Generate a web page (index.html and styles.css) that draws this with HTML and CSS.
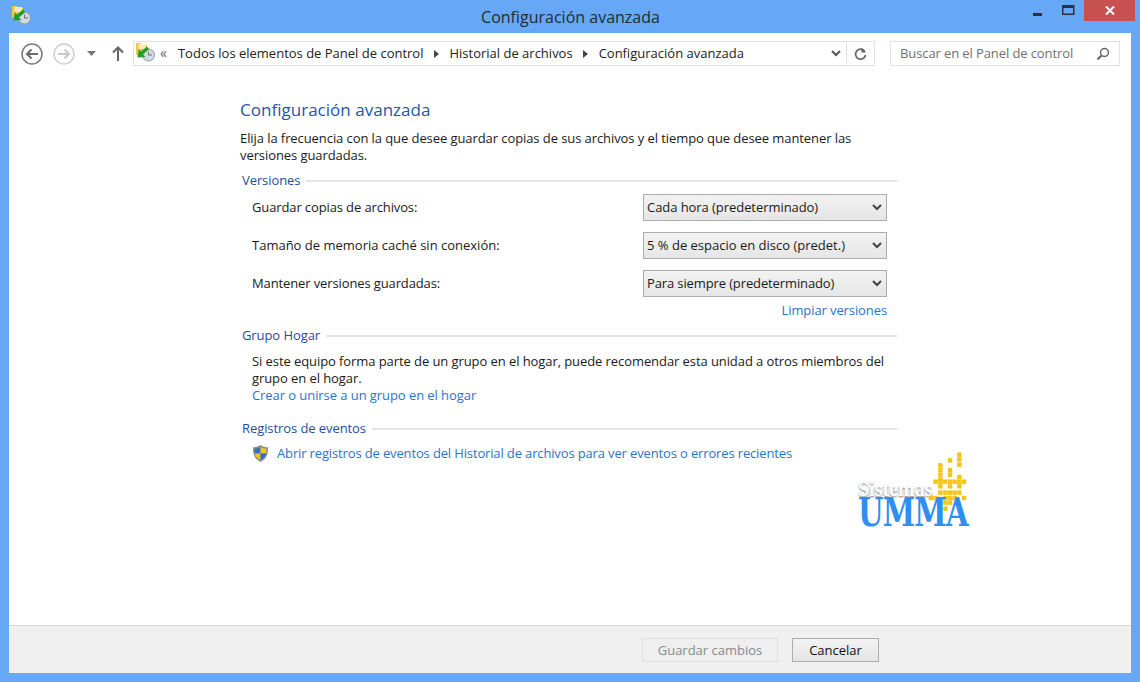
FILE: index.html
```html
<!DOCTYPE html>
<html lang="es">
<head>
<meta charset="utf-8">
<title>Configuración avanzada</title>
<link rel="stylesheet" href="styles.css">
</head>
<body>
<svg width="0" height="0" class="defs">
  <defs>
    <g id="fh">
      <path d="M1 1h4.500l1 1H11l1 1v10H2l-1-1z" fill="#f0c64c"/>
      <path d="M3.500 2H11v5H3.500z" fill="#fcedb0"/>
      <circle cx="13.500" cy="13" r="6" fill="#d3d9de" stroke="#8f9aa3" stroke-width="1"/>
      <path d="M13.500 9.500V13h3.500" fill="none" stroke="#66727c" stroke-width="1"/>
      <path d="M12 4.500 6 9.500 3.800 7.300 2.500 15.500l8-.6-2.500-2.400 6-5.300z" fill="#1f9e28"/>
    </g>
  </defs>
</svg>
<div class="window">
  <header class="titlebar">
    <svg class="app-icon" width="20" height="20" viewBox="0 0 20 20"><use href="#fh"/></svg>
    <div class="title">Configuración avanzada</div>
    <div class="controls">
      <span class="ctl ctl-min"><svg width="10" height="3" viewBox="0 0 10 3"><rect width="9" height="3" fill="#2a3340"/></svg></span>
      <span class="ctl"><svg width="13" height="11" viewBox="0 0 13 11"><rect x=".75" y=".75" width="11" height="8.500" fill="none" stroke="#2a3340" stroke-width="1.500"/><rect x="1" y="1" width="11" height="2" fill="#2a3340"/></svg></span>
      <span class="close"><svg width="10" height="9" viewBox="0 0 10 9"><path d="M1 .5l8 8M9 .5l-8 8" stroke="#fff" stroke-width="2"/></svg></span>
    </div>
  </header>
  <div class="client">
    <nav class="toolbar">
      <svg class="nav-btn" width="22" height="22" viewBox="0 0 22 22"><circle cx="11" cy="11" r="10" fill="none" stroke="#7a7a7a" stroke-width="1.500"/><path d="M17 11H6M10.500 6.500 6 11l4.500 4.500" fill="none" stroke="#6a6a6a" stroke-width="2"/></svg>
      <svg class="nav-btn" width="22" height="22" viewBox="0 0 22 22"><circle cx="11" cy="11" r="10" fill="none" stroke="#cfcfcf" stroke-width="1.500"/><path d="M5 11h11M11.500 6.500 16 11l-4.500 4.500" fill="none" stroke="#c9c9c9" stroke-width="2"/></svg>
      <svg class="nav-drop" width="9" height="5" viewBox="0 0 9 5"><path d="M0 0h9L4.500 5z" fill="#777"/></svg>
      <svg class="nav-up" width="12" height="15" viewBox="0 0 12 15"><path d="M6 15V2M1 6.500 6 1.500l5 5" fill="none" stroke="#666" stroke-width="2"/></svg>
      <div class="address">
        <svg class="addr-icon" width="20" height="20" viewBox="0 0 20 20"><use href="#fh"/></svg>
        <span class="crumb-more">«</span>
        <span class="crumb">Todos los elementos de Panel de control</span>
        <svg class="sep" width="5" height="8" viewBox="0 0 5 8"><path d="M0 0l5 4-5 4z" fill="#444"/></svg>
        <span class="crumb">Historial de archivos</span>
        <svg class="sep" width="5" height="8" viewBox="0 0 5 8"><path d="M0 0l5 4-5 4z" fill="#444"/></svg>
        <span class="crumb">Configuración avanzada</span>
        <svg class="addr-chev" width="10" height="7" viewBox="0 0 10 7"><path d="M1 1l4 4 4-4" fill="none" stroke="#555" stroke-width="2"/></svg>
        <span class="refresh"><svg width="13" height="14" viewBox="0 0 13 14"><path d="M10.800 4.500A5 5 0 1 0 11.500 8" fill="none" stroke="#666" stroke-width="1.700"/><path d="M7.500 .5v5h4.500z" fill="#666"/></svg></span>
      </div>
      <div class="search">
        <span class="search-text">Buscar en el Panel de control</span>
        <svg width="14" height="14" viewBox="0 0 14 14"><circle cx="8.500" cy="5.500" r="4" fill="none" stroke="#666" stroke-width="1.500"/><path d="M5.500 8.500l-4 4" stroke="#666" stroke-width="2.200"/></svg>
      </div>
    </nav>
    <main class="main">
      <h1 class="heading">Configuración avanzada</h1>
      <p class="desc">Elija la frecuencia con la que desee guardar copias de sus archivos y el tiempo que desee mantener las versiones guardadas.</p>

      <div class="sec-head"><span>Versiones</span><i></i></div>
      <div class="rows">
        <div class="row"><span>Guardar copias de archivos:</span><div class="select">Cada hora (predeterminado)<svg width="10" height="7" viewBox="0 0 10 7"><path d="M1 1l4 4 4-4" fill="none" stroke="#444" stroke-width="2"/></svg></div></div>
        <div class="row row-wide"><span>Tamaño de memoria caché sin conexión:</span><div class="select">5 % de espacio en disco (predet.)<svg width="10" height="7" viewBox="0 0 10 7"><path d="M1 1l4 4 4-4" fill="none" stroke="#444" stroke-width="2"/></svg></div></div>
        <div class="row"><span>Mantener versiones guardadas:</span><div class="select select-tight">Para siempre (predeterminado)<svg width="10" height="7" viewBox="0 0 10 7"><path d="M1 1l4 4 4-4" fill="none" stroke="#444" stroke-width="2"/></svg></div></div>
      </div>
      <div class="clean"><a class="link">Limpiar versiones</a></div>

      <div class="sec-head sec-home"><span>Grupo Hogar</span><i></i></div>
      <div class="indent">
        <p class="home-text">Si este equipo forma parte de un grupo en el hogar, puede recomendar esta unidad a otros miembros del grupo en el hogar.</p>
        <a class="link link-home">Crear o unirse a un grupo en el hogar</a>
      </div>

      <div class="sec-head sec-events"><span>Registros de eventos</span><i></i></div>
      <div class="indent event-row">
        <svg width="17" height="19" viewBox="0 0 18 19"><path d="M9 .5c2.500 1.800 5 2.300 8 2.500 0 7-1 12-8 15.500C2 15 1 10 1 3c3-.2 5.500-.7 8-2.500z" fill="#8d8d8d"/><path d="M9 2.500v7H3c-.2-1.800-.2-3.500-.1-5.200C5 4.100 7.200 3.600 9 2.500z" fill="#2c6fc4"/><path d="M9 2.500c1.800 1.100 4 1.600 6.100 1.800.1 1.700.1 3.400-.1 5.200H9z" fill="#f3c623"/><path d="M3 9.500h6v7c-3.500-2-5.400-4-6-7z" fill="#f3c623"/><path d="M9 9.500h6c-.6 3-2.500 5-6 7z" fill="#2c6fc4"/></svg>
        <a class="link link-event">Abrir registros de eventos del Historial de archivos para ver eventos o errores recientes</a>
      </div>
    </main>
    <div class="logo">
      <svg class="logo-px" width="42" height="60" viewBox="260 35 126 180" fill="#f5c518" stroke="#f5c518" stroke-width="1.500">
        <path d="M351 37h12v12h-12zM351 51h12v12h-12zM351 67h12v12h-12zM323 54h12v12h-12zM294 69h12v12h-12zM294 83h12v12h-12zM294 97h12v12h-12zM294 111h12v12h-12zM323 83h12v12h-12zM323 97h12v12h-12zM351 104h12v12h-12z"/>
        <path d="M280 118h12v12h-12zM294 118h12v12h-12zM308 118h12v12h-12zM323 118h12v12h-12zM337 118h12v12h-12zM351 118h12v12h-12zM365 118h12v12h-12zM294 132h12v12h-12zM323 132h12v12h-12zM351 132h12v12h-12zM294 151h12v12h-12zM309 151h12v12h-12zM323 151h12v12h-12zM337 151h12v12h-12zM351 151h12v12h-12z"/>
        <path d="M266 167h12v12h-12zM280 167h12v12h-12zM309 167h12v12h-12zM323 167h12v12h-12zM337 167h12v12h-12zM365 167h12v12h-12zM309 181h12v12h-12zM323 181h12v12h-12zM309 199h12v12h-12z"/>
      </svg>
      <span class="logo-small">Sistemas</span>
      <span class="logo-big">UMMA</span>
    </div>
    <footer class="footer">
      <button class="btn btn-off" type="button">Guardar cambios</button>
      <button class="btn btn-on" type="button">Cancelar</button>
    </footer>
  </div>
</div>
</body>
</html>
```

FILE: styles.css
```css
* { box-sizing: border-box; }
html, body { margin: 0; padding: 0; }
body { width: 1140px; height: 682px; overflow: hidden; font-family: "Open Sans", "Noto Sans", sans-serif; font-size: 13px; color: #1a1a1a; }
.defs { position: absolute; }
.window { width: 1140px; height: 682px; background: #66a8f5; display: flex; flex-direction: column; padding: 0 9px 9px; }
.titlebar { height: 33px; flex: none; display: flex; align-items: center; position: relative; margin: 0 -9px; }
.app-icon { position: absolute; left: 11px; top: 5px; }
.title { flex: 1; text-align: center; font-size: 16px; color: #222c38; padding-left: 1px; }
.controls { position: absolute; right: 5px; top: 0; display: flex; align-items: flex-start; }
.ctl { width: 31px; height: 21px; display: flex; align-items: center; justify-content: center; }
.ctl-min { padding-top: 7px; }
.close { width: 51px; height: 21px; background: #c75050; display: flex; align-items: center; justify-content: center; }
.client { flex: 1; background: #fff; display: flex; flex-direction: column; position: relative; min-height: 0; }
.toolbar { height: 41px; flex: none; display: flex; align-items: center; padding: 8px 0 8px 12px; position: relative; }
.nav-btn { margin: 0 10px 0 0; }
.nav-drop { margin: 0 16px 0 2px; }
.nav-up { margin: 0 9px 0 0; }
.address { width: 742px; height: 25px; border: 1px solid #e2e2e2; display: flex; align-items: center; padding-left: 1px; color: #222; flex: none; }
.addr-icon { margin-top: -3px; }
.crumb-more { margin: 0 11px 2px 5px; color: #666; font-size: 14px; line-height: 1; }
.crumb { padding-bottom: 2px; }
.sep { margin: 0 10.500px; }
.addr-chev { margin-left: auto; margin-right: 5px; }
.refresh { width: 28px; height: 23px; border-left: 1px solid #e2e2e2; display: flex; align-items: center; justify-content: center; }
.search { width: 230px; height: 25px; border: 1px solid #e2e2e2; margin-left: 15px; display: flex; align-items: center; justify-content: space-between; padding: 0 9px; color: #6f6f6f; letter-spacing: -.1px; flex: none; }
.search-text { padding-bottom: 2px; }
.main { flex: 1; padding: 24px 0 0 231px; width: 888px; min-height: 0; }
.heading { margin: 0; font-size: 17px; line-height: 24px; font-weight: 400; color: #1f56a8; letter-spacing: .02px; }
.desc { margin: 8px 0 0; line-height: 17px; width: 640px; letter-spacing: -.08px; }
.sec-head { display: flex; align-items: center; padding-left: 2px; line-height: 17px; color: #1f4e9c; margin-top: 8px; letter-spacing: -.08px; }
.sec-head i { flex: 1; height: 2px; background: #e4e4e4; margin-left: 6px; margin-top: 1px; }
.rows { display: flex; flex-direction: column; gap: 11px; margin-top: 5px; padding-left: 12px; padding-right: 10px; }
.row { display: flex; justify-content: space-between; align-items: center; }
.row span { padding-bottom: 2px; letter-spacing: -.12px; }
.row-wide span { letter-spacing: 0; }
.select { width: 244px; height: 27px; border: 1px solid #acacac; background: linear-gradient(#f2f2f2, #e6e6e6); display: flex; align-items: center; justify-content: space-between; padding: 0 4px 2px 3px; letter-spacing: -.06px; }
.row-wide .select { letter-spacing: 0; }
.select-tight { letter-spacing: -.12px; }
.select svg { margin-top: 2px; }
.clean { text-align: right; padding-right: 10px; margin-top: 5px; line-height: 17px; }
.link { color: #2a74c9; letter-spacing: -.1px; }
.link-home { letter-spacing: -.07px; }
.link-event { letter-spacing: -.14px; }
.sec-home { margin-top: 8px; }
.indent { padding-left: 12px; line-height: 17px; }
.home-text { margin: 9px 0 0; width: 640px; letter-spacing: -.08px; }
.sec-events { margin-top: 16px; }
.event-row { display: flex; align-items: center; gap: 8px; margin-top: 7px; }
.logo { position: absolute; left: 849px; top: 448px; width: 112px; display: flex; flex-direction: column; }
.logo-px { position: absolute; left: 69px; top: -29px; }
.logo-small { font: 700 20px/16px "Liberation Serif", serif; color: #fff; text-shadow: 0 1px 2px #777; }
.logo-big { font: 700 40px/30px "DejaVu Serif", serif; color: #2f8ef0; letter-spacing: -1px; transform: scaleX(.73); transform-origin: left top; white-space: nowrap; }
.footer { height: 48px; flex: none; background: #f0f0f0; border-top: 1px solid #d9d9d9; display: flex; justify-content: flex-end; align-items: center; gap: 14px; padding-right: 252px; }
.btn { width: 87px; height: 24px; font: inherit; padding: 0; }
.btn-off { width: 136px; background: #efefef; border: 1px solid #e0e0e0; color: #8a8a8a; }
.btn-on { background: linear-gradient(#f2f2f2, #e5e5e5); border: 1px solid #acacac; color: #111; }
```
